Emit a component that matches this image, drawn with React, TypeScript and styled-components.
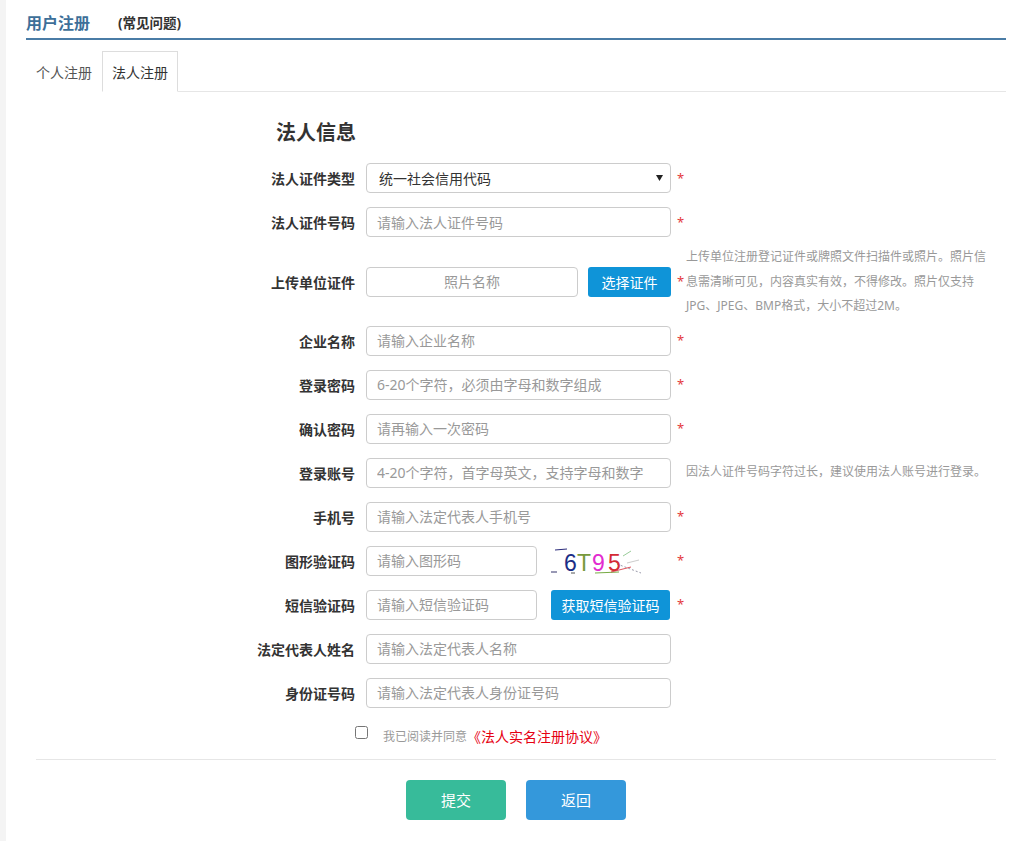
import React from "react";
import styled, { createGlobalStyle } from "styled-components";

const GlobalStyle = createGlobalStyle`
  * { box-sizing: border-box; }
  body {
    margin: 0;
    background: #fff;
    font-family: "Noto Sans", "Noto Sans CJK SC", sans-serif;
    color: #333;
  }
  input::placeholder { color: #999; }
`;

const Page = styled.div`
  display: flex;
  min-height: 841px;
`;

const SideStrip = styled.div`
  width: 6px;
  flex: none;
  background: #f4f4f4;
`;

const Main = styled.div`
  flex: 1;
  padding: 0 20px;
`;

const Header = styled.div`
  height: 40px;
  padding-top: 6px;
  display: flex;
  align-items: center;
  border-bottom: 2px solid #4a7ca6;
`;

const Title = styled.span`
  font-size: 16px;
  font-weight: 700;
  color: #3d6f99;
`;

const FaqLink = styled.span`
  font-size: 13.5px;
  font-weight: 700;
  color: #333;
  margin-left: 28px;
`;

const TabBar = styled.div`
  display: flex;
  padding-top: 11px;
  border-bottom: 1px solid #e6e6e6;
`;

const Tab = styled.div<{ $active?: boolean }>`
  height: 41px;
  margin-bottom: -1px;
  padding: 0 9px;
  display: flex;
  align-items: center;
  font-size: 14px;
  color: ${(p) => (p.$active ? "#333" : "#555")};
  background: #fff;
  border: 1px solid ${(p) => (p.$active ? "#ddd" : "transparent")};
  border-bottom-color: ${(p) => (p.$active ? "#fff" : "transparent")};
`;

const FormArea = styled.div`
  padding-left: 219px;
  padding-top: 27px;
  display: flex;
  flex-direction: column;
  gap: 14px;
`;

const SectionTitle = styled.h2`
  margin: 0 0 2px 31px;
  font-size: 20px;
  line-height: 28px;
  font-weight: 700;
  color: #333;
`;

const Row = styled.div<{ $tall?: boolean }>`
  display: flex;
  align-items: center;
  min-height: 30px;
  margin: ${(p) => (p.$tall ? "-6px 0 -7px" : "0")};
`;

const Label = styled.label`
  width: 110px;
  flex: none;
  margin-right: 11px;
  text-align: right;
  font-size: 14px;
  font-weight: 700;
  color: #333;
  white-space: nowrap;
`;

const Field = styled.div<{ $w?: number }>`
  width: ${(p) => p.$w ?? 305}px;
  flex: none;
  display: flex;
  align-items: center;
  gap: 10px;
  position: relative;
`;

const TextInput = styled.input<{ $w?: number; $center?: boolean }>`
  width: ${(p) => (p.$w ? `${p.$w}px` : "100%")};
  flex: none;
  height: 30px;
  padding: 0 10px;
  border: 1px solid #ccc;
  border-radius: 4px;
  font-family: inherit;
  font-size: 14px;
  color: #333;
  outline: none;
  text-align: ${(p) => (p.$center ? "center" : "left")};
  background: #fff;
`;

const Select = styled.select`
  width: 100%;
  height: 30px;
  padding: 0 12px;
  border: 1px solid #ccc;
  border-radius: 4px;
  font-family: inherit;
  font-size: 14px;
  color: #333;
  background: #fff;
  appearance: none;
  -webkit-appearance: none;
  outline: none;
`;

const Caret = styled.svg`
  position: absolute;
  right: 8px;
  top: 12px;
  pointer-events: none;
`;

const BlueButton = styled.button<{ $w: number; $offset?: number }>`
  width: ${(p) => p.$w}px;
  flex: none;
  height: 30px;
  margin-left: ${(p) => p.$offset ?? 0}px;
  border: none;
  border-radius: 3px;
  background: #0f94d8;
  color: #fff;
  font-family: inherit;
  font-size: 14px;
  padding: 0;
  cursor: pointer;
`;

const Star = styled.span`
  width: 15px;
  flex: none;
  padding-left: 6px;
  color: #e4393c;
  font-size: 13px;
  line-height: 1;
`;

const Hint = styled.div`
  font-size: 12px;
  line-height: 24.5px;
  color: #999;
  white-space: nowrap;
`;

const CaptchaBox = styled.div`
  width: 100px;
  height: 30px;
  margin-left: 4px;
  flex: none;
`;

const AgreeRow = styled.div`
  display: flex;
  align-items: center;
  height: 28px;
  padding-left: 110px;
`;

const Check = styled.input`
  width: 13px;
  height: 13px;
  margin: 0 15px 6px 0;
`;

const AgreeText = styled.span`
  font-size: 12px;
  color: #999;
`;

const AgreeLink = styled.span`
  font-size: 14px;
  color: #e60012;
`;

const Divider = styled.div`
  height: 1px;
  background: #e6e6e6;
  margin: 9px 10px 0;
`;

const Actions = styled.div`
  display: flex;
  justify-content: center;
  gap: 20px;
  margin-top: 20px;
`;

const ActionButton = styled.button<{ $bg: string }>`
  width: 100px;
  height: 40px;
  border: none;
  border-radius: 4px;
  background: ${(p) => p.$bg};
  color: #fff;
  font-family: inherit;
  font-size: 15px;
  cursor: pointer;
`;

const glyphs = [
  { ch: "6", x: 13, color: "#1b2e86" },
  { ch: "T", x: 26, color: "#789a3c" },
  { ch: "9", x: 41, color: "#e22bd0" },
  { ch: "5", x: 57, color: "#d42a35" },
];

function Captcha() {
  return (
    <svg width="100" height="30" viewBox="0 0 100 30">
      <line x1="4" y1="4" x2="16" y2="3" stroke="#2a2a7a" strokeWidth="1" />
      <line x1="0" y1="26" x2="6" y2="26" stroke="#33336a" strokeWidth="1" />
      <line x1="72" y1="10" x2="80" y2="5" stroke="#9c9" strokeWidth="1" />
      <line x1="76" y1="17" x2="88" y2="14" stroke="#ccc" strokeWidth="1" />
      <line x1="66" y1="18" x2="90" y2="27" stroke="#99a" strokeWidth="1" strokeDasharray="2 2" />
      <line x1="44" y1="27" x2="68" y2="26" stroke="#7a4" strokeWidth="1" />
      <line x1="20" y1="27" x2="24" y2="27" stroke="#555" strokeWidth="1" />
      {glyphs.map((g) => (
        <text
          key={g.ch}
          x={g.x}
          y="25"
          fontFamily="Liberation Sans, sans-serif"
          fontSize="23"
          fill={g.color}
        >
          {g.ch}
        </text>
      ))}
      <line x1="60" y1="26" x2="80" y2="21" stroke="#d42a35" strokeWidth="0.8" />
    </svg>
  );
}

const rowsAfter = [
  { label: "企业名称", ph: "请输入企业名称" },
  { label: "登录密码", ph: "6-20个字符，必须由字母和数字组成" },
  { label: "确认密码", ph: "请再输入一次密码" },
];

export default function App() {
  return (
    <>
      <GlobalStyle />
      <Page>
        <SideStrip />
        <Main>
          <Header>
            <Title>用户注册</Title>
            <FaqLink>(常见问题)</FaqLink>
          </Header>
          <TabBar>
            <Tab>个人注册</Tab>
            <Tab $active>法人注册</Tab>
          </TabBar>

          <FormArea>
            <SectionTitle>法人信息</SectionTitle>

            <Row>
              <Label>法人证件类型</Label>
              <Field>
                <Select defaultValue="1">
                  <option value="1">统一社会信用代码</option>
                </Select>
                <Caret width="7" height="6" viewBox="0 0 7 6">
                  <path d="M0 0 L7 0 L3.5 6 Z" fill="#222" />
                </Caret>
              </Field>
              <Star>*</Star>
            </Row>

            <Row>
              <Label>法人证件号码</Label>
              <Field>
                <TextInput placeholder="请输入法人证件号码" />
              </Field>
              <Star>*</Star>
            </Row>

            <Row $tall>
              <Label>上传单位证件</Label>
              <Field>
                <TextInput $w={212} $center placeholder="照片名称" />
                <BlueButton $w={83}>选择证件</BlueButton>
              </Field>
              <Star>*</Star>
              <Hint>
                上传单位注册登记证件或牌照文件扫描件或照片。照片信
                <br />
                息需清晰可见，内容真实有效，不得修改。照片仅支持
                <br />
                JPG、JPEG、BMP格式，大小不超过2M。
              </Hint>
            </Row>

            {rowsAfter.map((r) => (
              <Row key={r.label}>
                <Label>{r.label}</Label>
                <Field>
                  <TextInput placeholder={r.ph} />
                </Field>
                <Star>*</Star>
              </Row>
            ))}

            <Row>
              <Label>登录账号</Label>
              <Field>
                <TextInput placeholder="4-20个字符，首字母英文，支持字母和数字" />
              </Field>
              <Star />
              <Hint>因法人证件号码字符过长，建议使用法人账号进行登录。</Hint>
            </Row>

            <Row>
              <Label>手机号</Label>
              <Field>
                <TextInput placeholder="请输入法定代表人手机号" />
              </Field>
              <Star>*</Star>
            </Row>

            <Row>
              <Label>图形验证码</Label>
              <Field>
                <TextInput $w={171} placeholder="请输入图形码" />
                <CaptchaBox>
                  <Captcha />
                </CaptchaBox>
              </Field>
              <Star>*</Star>
            </Row>

            <Row>
              <Label>短信验证码</Label>
              <Field>
                <TextInput $w={171} placeholder="请输入短信验证码" />
                <BlueButton $w={119} $offset={4}>
                  获取短信验证码
                </BlueButton>
              </Field>
              <Star>*</Star>
            </Row>

            <Row>
              <Label>法定代表人姓名</Label>
              <Field>
                <TextInput placeholder="请输入法定代表人名称" />
              </Field>
              <Star />
            </Row>

            <Row>
              <Label>身份证号码</Label>
              <Field>
                <TextInput placeholder="请输入法定代表人身份证号码" />
              </Field>
              <Star />
            </Row>

            <AgreeRow>
              <Check type="checkbox" />
              <AgreeText>我已阅读并同意</AgreeText>
              <AgreeLink>《法人实名注册协议》</AgreeLink>
            </AgreeRow>
          </FormArea>

          <Divider />
          <Actions>
            <ActionButton $bg="#37bb9a">提交</ActionButton>
            <ActionButton $bg="#3498db">返回</ActionButton>
          </Actions>
        </Main>
      </Page>
    </>
  );
}
